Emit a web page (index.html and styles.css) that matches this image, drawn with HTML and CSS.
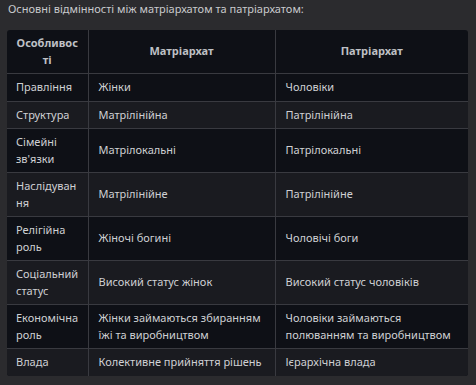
FILE: index.html
```html
<!DOCTYPE html>
<html lang="uk">
<head>
<meta charset="utf-8">
<link rel="stylesheet" href="styles.css">
</head>
<body>
<p class="intro">Основні відмінності між матріархатом та патріархатом:</p>
<div class="table-wrap">
<table class="cmp">
<colgroup><col class="c1"><col class="c2"><col class="c3"></colgroup>
<thead>
<tr><th>Особливості</th><th>Матріархат</th><th>Патріархат</th></tr>
</thead>
<tbody>
<tr><td>Правління</td><td>Жінки</td><td>Чоловіки</td></tr>
<tr><td>Структура</td><td>Матрілінійна</td><td>Патрілінійна</td></tr>
<tr><td>Сімейні зв'язки</td><td>Матрілокальні</td><td>Патрілокальні</td></tr>
<tr><td>Наслідування</td><td>Матрілінійне</td><td>Патрілінійне</td></tr>
<tr><td>Релігійна роль</td><td>Жіночі богині</td><td>Чоловічі боги</td></tr>
<tr><td>Соціальний статус</td><td>Високий статус жінок</td><td>Високий статус чоловіків</td></tr>
<tr><td>Економічна роль</td><td>Жінки займаються збиранням їжі та виробництвом</td><td>Чоловіки займаються полюванням та виробництвом</td></tr>
<tr><td>Влада</td><td>Колективне прийняття рішень</td><td>Ієрархічна влада</td></tr>
</tbody>
</table>
</div>
</body>
</html>
```
FILE: styles.css
```css
html, body {
  margin: 0;
  padding: 0;
  background: #2b2b2e;
}
body {
  font-family: "Noto Sans", "Open Sans", sans-serif;
  font-size: 11px;
  color: #cfd0d4;
  padding: 0 8px 0 7px;
}
.intro {
  margin: 0;
  padding: 1px 0 0 1px;
  line-height: 16px;
  height: 29px;
  color: #c9cacd;
}
.table-wrap {
  width: 461px;
  border-radius: 3px;
  overflow: hidden;
  background: #0e1016;
}
.cmp {
  width: 461px;
  table-layout: fixed;
  border-collapse: collapse;
}
.c1 { width: 81px; }
.c2 { width: 187px; }
.c3 { width: 193px; }
.cmp th, .cmp td {
  border: 1px solid #393a40;
  line-height: 16.5px;
  padding: 5px 10px;
  overflow-wrap: anywhere;
  word-break: normal;
  vertical-align: middle;
}
.cmp tr > :first-child { border-left: none; }
.cmp tr > :last-child { border-right: none; }
.cmp thead th {
  border-top: none;
  font-weight: 700;
  color: #bfc0c5;
  text-align: center;
  padding: 5px 9px;
}
.cmp tbody tr:last-child td { border-bottom: none; }
.cmp tbody td { text-align: left; }
.cmp tbody td:first-child { padding-left: 9px; padding-right: 8px; }
.cmp tbody tr:nth-child(odd) { background: #0e1016; }
.cmp tbody tr:nth-child(even) { background: #1a1b20; }
```
